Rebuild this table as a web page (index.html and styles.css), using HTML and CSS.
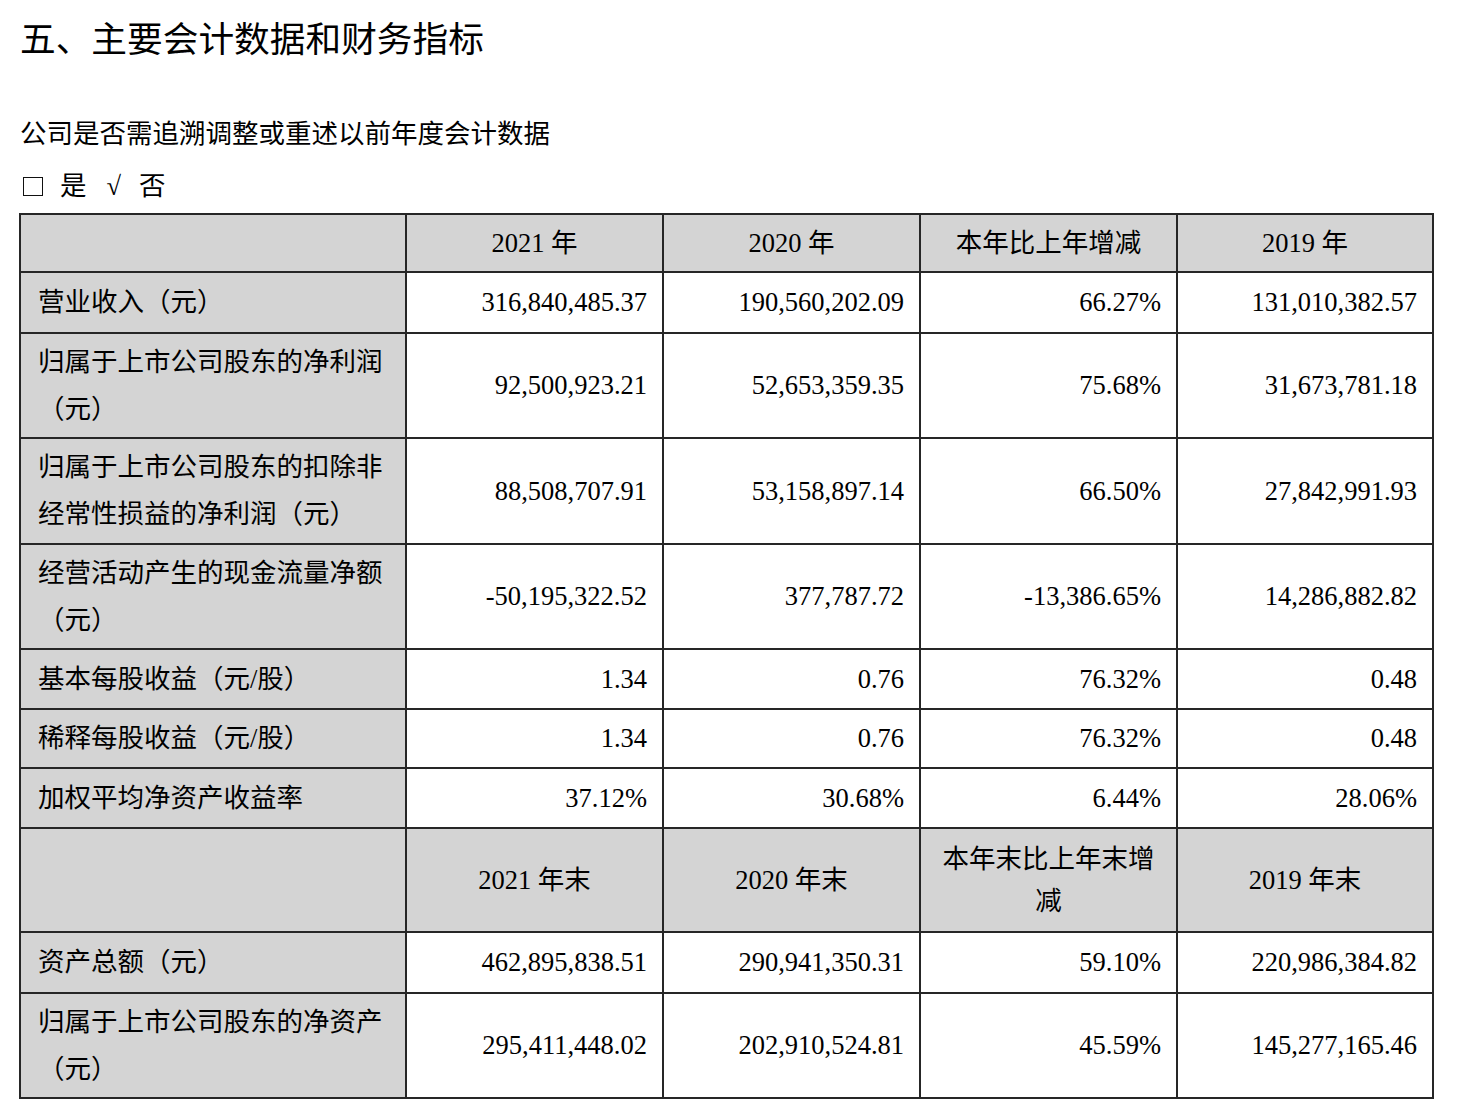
FILE: index.html
```html
<!DOCTYPE html>
<html lang="zh-CN">
<head>
<meta charset="utf-8">
<title>主要会计数据和财务指标</title>
<link rel="stylesheet" href="styles.css">
</head>
<body>
<div class="page">
  <h1 class="title">五、主要会计数据和财务指标</h1>
  <p class="question">公司是否需追溯调整或重述以前年度会计数据</p>
  <p class="choice"><span class="box"></span><span class="opt1">是</span><span class="tick">√</span><span class="opt2">否</span></p>
  <table class="fin">
    <colgroup>
      <col class="c-label">
      <col class="c-num">
      <col class="c-num">
      <col class="c-num">
      <col class="c-last">
    </colgroup>
    <tr class="h58 head">
      <td class="label"></td>
      <td class="hd">2021 年</td>
      <td class="hd">2020 年</td>
      <td class="hd">本年比上年增减</td>
      <td class="hd">2019 年</td>
    </tr>
    <tr class="h61">
      <td class="label">营业收入（元）</td>
      <td class="num">316,840,485.37</td>
      <td class="num">190,560,202.09</td>
      <td class="num">66.27%</td>
      <td class="num">131,010,382.57</td>
    </tr>
    <tr class="h105">
      <td class="label">归属于上市公司股东的净利润<br>（元）</td>
      <td class="num">92,500,923.21</td>
      <td class="num">52,653,359.35</td>
      <td class="num">75.68%</td>
      <td class="num">31,673,781.18</td>
    </tr>
    <tr class="h106">
      <td class="label">归属于上市公司股东的扣除非<br>经常性损益的净利润（元）</td>
      <td class="num">88,508,707.91</td>
      <td class="num">53,158,897.14</td>
      <td class="num">66.50%</td>
      <td class="num">27,842,991.93</td>
    </tr>
    <tr class="h105">
      <td class="label">经营活动产生的现金流量净额<br>（元）</td>
      <td class="num">-50,195,322.52</td>
      <td class="num">377,787.72</td>
      <td class="num">-13,386.65%</td>
      <td class="num">14,286,882.82</td>
    </tr>
    <tr class="h60">
      <td class="label">基本每股收益（元/股）</td>
      <td class="num">1.34</td>
      <td class="num">0.76</td>
      <td class="num">76.32%</td>
      <td class="num">0.48</td>
    </tr>
    <tr class="h59">
      <td class="label">稀释每股收益（元/股）</td>
      <td class="num">1.34</td>
      <td class="num">0.76</td>
      <td class="num">76.32%</td>
      <td class="num">0.48</td>
    </tr>
    <tr class="h60">
      <td class="label">加权平均净资产收益率</td>
      <td class="num">37.12%</td>
      <td class="num">30.68%</td>
      <td class="num">6.44%</td>
      <td class="num">28.06%</td>
    </tr>
    <tr class="h104 head">
      <td class="label"></td>
      <td class="hd">2021 年末</td>
      <td class="hd">2020 年末</td>
      <td class="hd two">本年末比上年末增<br>减</td>
      <td class="hd">2019 年末</td>
    </tr>
    <tr class="h61">
      <td class="label">资产总额（元）</td>
      <td class="num">462,895,838.51</td>
      <td class="num">290,941,350.31</td>
      <td class="num">59.10%</td>
      <td class="num">220,986,384.82</td>
    </tr>
    <tr class="h105">
      <td class="label">归属于上市公司股东的净资产<br>（元）</td>
      <td class="num">295,411,448.02</td>
      <td class="num">202,910,524.81</td>
      <td class="num">45.59%</td>
      <td class="num">145,277,165.46</td>
    </tr>
  </table>
</div>
</body>
</html>
```

FILE: styles.css
```css
html, body {
  margin: 0;
  padding: 0;
  background: #ffffff;
}

body {
  font-family: "Liberation Serif", "Noto Sans CJK SC", serif;
  color: #000000;
  font-size: 26.5px;
}

.page {
  padding: 20px 0 0 19px;
}

.title {
  margin: 0;
  padding-left: 1px;
  font-size: 35.7px;
  font-weight: 400;
  line-height: 40px;
  height: 40px;
}

.question {
  margin: 54px 0 0 0;
  padding-left: 1px;
  line-height: 40px;
  height: 40px;
}

.choice {
  margin: 12px 0 0 0;
  padding-left: 4px;
  line-height: 40px;
  height: 40px;
  display: flex;
  align-items: center;
}

.box {
  display: inline-block;
  width: 18px;
  height: 17px;
  border: 1.5px solid #111111;
  margin-right: 17px;
  margin-top: 1px;
}

.opt1 {
  margin-right: 20px;
}

.tick {
  margin-right: 18px;
}

.fin {
  margin-top: 7px;
  border-collapse: collapse;
  table-layout: fixed;
  width: 1413px;
  border: 2px solid #1e1e1e;
}

.c-label { width: 386px; }
.c-num { width: 257px; }
.c-last { width: 256px; }

.fin td {
  border: 2px solid #262626;
  padding: 0;
  line-height: 47px;
  vertical-align: middle;
  white-space: nowrap;
}

.fin td.label {
  background: #d4d4d4;
  padding-left: 17px;
  text-align: left;
}

.fin td.num {
  text-align: right;
  padding-right: 15px;
}

.fin tr.head td {
  background: #d4d4d4;
}

.fin td.hd {
  text-align: center;
}

.fin td.two {
  line-height: 42px;
}

.h58 { height: 58px; }
.h59 { height: 59px; }
.h60 { height: 60px; }
.h61 { height: 61px; }
.h104 { height: 104px; }
.h105 { height: 105px; }
.h106 { height: 106px; }
```
